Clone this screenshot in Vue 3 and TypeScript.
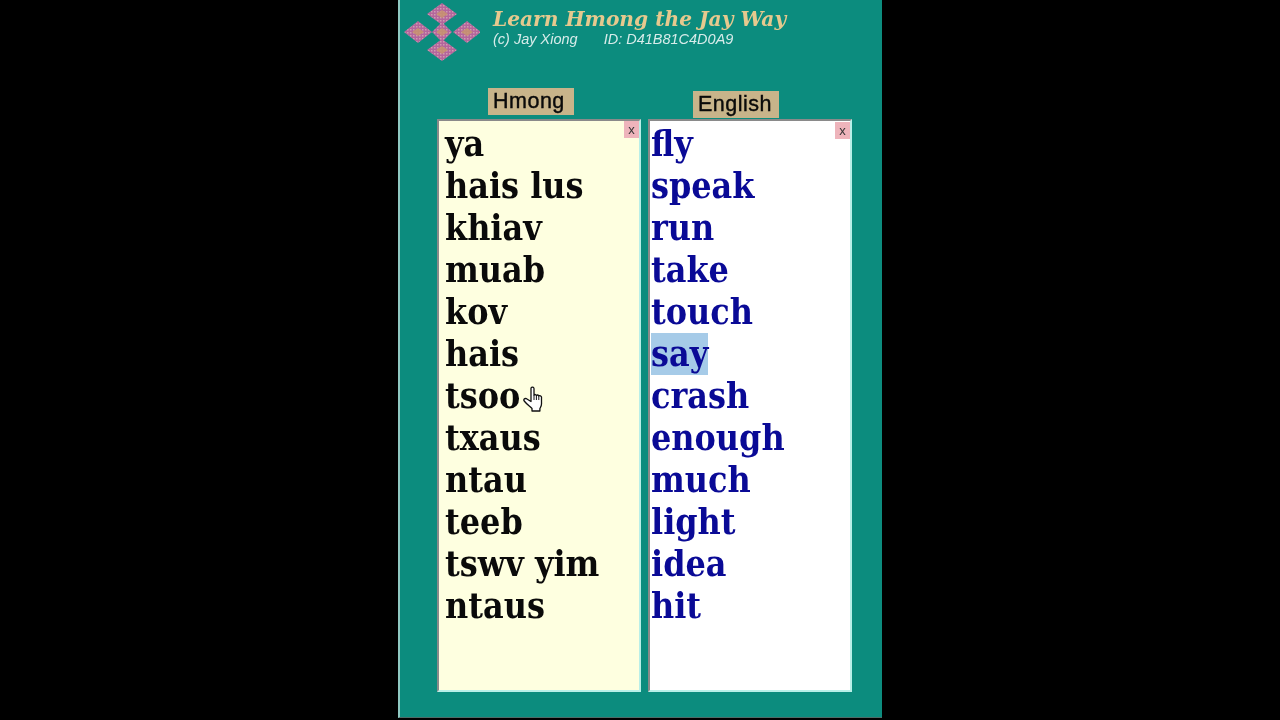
<script setup lang="ts">
const hmong: string[] = ['ya','hais lus','khiav','muab','kov','hais','tsoo','txaus','ntau','teeb','tswv yim','ntaus']
const english: string[] = ['fly','speak','run','take','touch','say','crash','enough','much','light','idea','hit']
const diamonds: number[][] = [[38,12,15,11],[14,30,14,11],[38,30,10,10],[63,30,14,11],[38,48,15,11]]
</script>

<template>
  <div class="stage">
    <main class="win">
      <header class="head">
        <svg class="logo" width="76" height="64" viewBox="0 0 76 64">
          <defs>
            <pattern id="weave" width="3" height="3" patternUnits="userSpaceOnUse">
              <rect width="3" height="3" fill="#b4659c"/>
              <rect width="1.500" height="1.500" fill="#cf9cb0"/>
            </pattern>
          </defs>
          <g v-for="d in diamonds" :key="d[0]+'-'+d[1]">
            <polygon :points="`${d[0]},${d[1]-d[3]} ${d[0]+d[2]},${d[1]} ${d[0]},${d[1]+d[3]} ${d[0]-d[2]},${d[1]}`" fill="url(#weave)"/>
            <polygon :points="`${d[0]},${d[1]-4} ${d[0]+6},${d[1]} ${d[0]},${d[1]+4} ${d[0]-6},${d[1]}`" fill="#c8946e" opacity=".85"/>
          </g>
        </svg>
        <div class="titles">
          <h1 class="title">Learn Hmong the Jay Way</h1>
          <p class="sub"><span>(c) Jay Xiong</span><span>ID: D41B81C4D0A9</span></p>
        </div>
      </header>
      <section class="cols">
        <div class="col col-h">
          <div class="label label-h">Hmong</div>
          <div class="box box-h">
            <button class="x">x</button>
            <div v-for="w in hmong" :key="w" class="word">{{ w }}</div>
            <svg class="hand" width="21" height="26" viewBox="0 0 21 26">
              <path d="M8 2c.8-1.400 2.700-1.200 3 .5V9c.8-.8 2-.6 2.400.4.800-.7 2-.5 2.400.5.900-.5 2.500-.1 2.700 1.100V18c0 2-.8 3-1.600 4.500V25H9v-2.500C7 20.500 3.500 18 1.200 15C.2 13.500 1.500 12 3.500 12.700L8 15.500V3z" fill="#fff" stroke="#111" stroke-width="1.300" stroke-linejoin="round"/>
              <path d="M11 9v5M13.400 9.500v4.500M15.800 10v4" stroke="#111" stroke-width="1" fill="none"/>
            </svg>
          </div>
        </div>
        <div class="col col-e">
          <div class="label label-e">English</div>
          <div class="box box-e">
            <button class="x x-e">x</button>
            <div v-for="w in english" :key="w" class="word"><span :class="{ sel: w === 'say' }">{{ w }}</span></div>
          </div>
        </div>
      </section>
    </main>
  </div>
</template>

<style scoped>
.stage { width: 1280px; height: 720px; background: #000; display: flex; justify-content: center; overflow: hidden; box-sizing: border-box; }
.win { width: 484px; height: 718px; margin-bottom: 2px; box-sizing: border-box; background: #0c8c7e; border-left: 2px solid #8fc9c2; border-bottom: 1px solid #4d6c68; display: flex; flex-direction: column; filter: blur(.4px); }
.head { display: flex; height: 88px; box-sizing: border-box; padding: 2px 0 0 4px; }
.logo { flex: none; }
.titles { margin-left: 13px; padding-top: 6px; }
.title { margin: 0; font: italic bold 20.200px/22px "DejaVu Serif", serif; color: #e6c98e; }
.sub { margin: 0; display: flex; gap: 26px; font: italic 14.500px/18px "Liberation Sans", sans-serif; color: #d8ecea; }
.cols { display: flex; gap: 7px; padding-left: 37px; }
.col { width: 204px; display: flex; flex-direction: column; align-items: flex-start; }
.label { width: 86px; box-sizing: border-box; background: #c8b48a; color: #0a0a0a; font: 21.500px/27px "Liberation Sans", sans-serif; letter-spacing: .5px; -webkit-text-stroke: .4px #0a0a0a; padding: 0 0 0 5px; height: 27px; white-space: nowrap; }
.label-h { margin: 0 0 4px 51px; }
.label-e { margin: 3px 0 1px 45px; }
.box { position: relative; width: 204px; height: 573px; box-sizing: border-box; border: 2px solid #8a8a8a; border-right-color: #b9efe8; border-bottom-color: #b9efe8; padding-top: 2px; font: bold 35.500px/42px "DejaVu Serif Condensed", "DejaVu Serif", serif; font-stretch: condensed; }
.box-h { background: #feffe0; color: #0a0a0a; padding-left: 6px; }
.box-e { background: #fff; color: #0a0a96; padding-left: 1px; }
.word { height: 42px; white-space: nowrap; }
.sel { background: #a6cbe8; display: inline-block; height: 42px; }
.x { position: absolute; top: 0; right: 0; width: 15px; height: 17px; padding: 0; border: 0; background: #eeb4bb; color: #333; font: 13px/15px "Liberation Sans", sans-serif; }
.x-e { top: 1px; }
.hand { position: absolute; left: 84px; top: 265px; }
</style>
